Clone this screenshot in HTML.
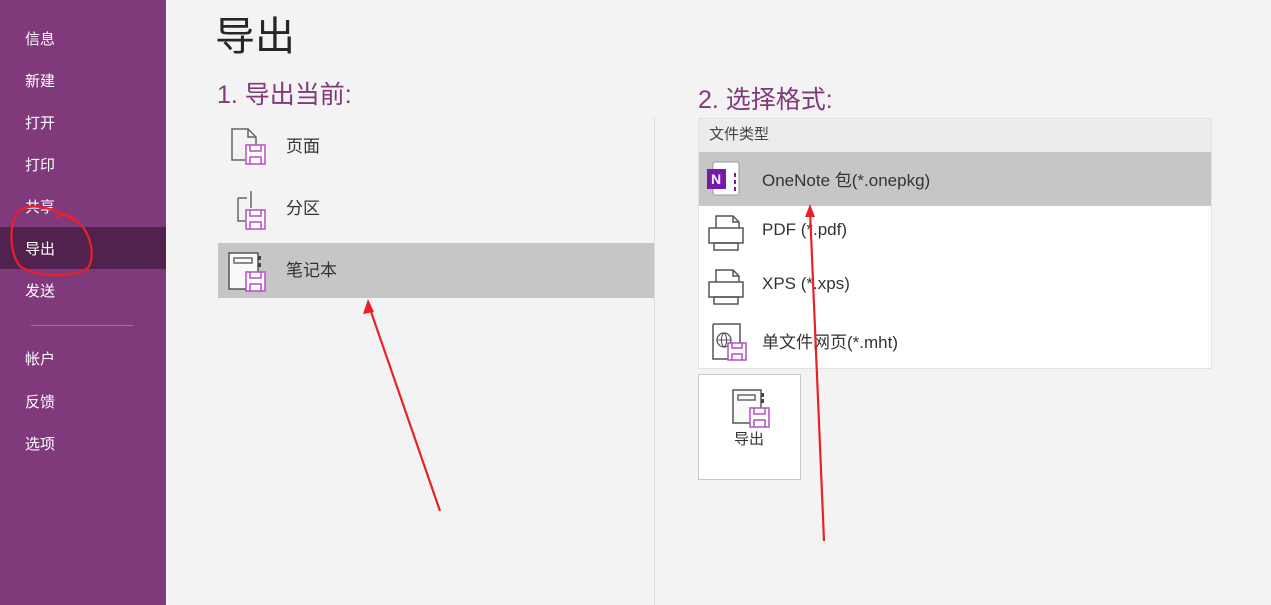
<!DOCTYPE html>
<html><head><meta charset="utf-8"><style>
*{margin:0;padding:0;box-sizing:border-box}
body{width:1271px;height:605px;background:#f3f3f3;position:relative;overflow:hidden;font-family:"Liberation Sans","Noto Sans CJK SC",sans-serif;color:#333}
.side{position:absolute;left:0;top:0;width:166px;height:605px;background:#80397b}
.side .m{position:absolute;left:25px;color:#fff;font-size:15px}
.sel{position:absolute;left:0;top:227px;width:166px;height:42px;background:#52224f}
.a{position:absolute}
.t{position:absolute;font-size:16px;color:#333}
svg{position:absolute;overflow:visible}
</style></head><body>
<div class="side">
<div class="sel"></div>
<div class="m" style="top:28px">信息</div>
<div class="m" style="top:70px">新建</div>
<div class="m" style="top:112px">打开</div>
<div class="m" style="top:154px">打印</div>
<div class="m" style="top:196px">共享</div>
<div class="m" style="top:238px">导出</div>
<div class="m" style="top:280px">发送</div>
<div class="a" style="top:325px;left:31px;width:102px;height:1px;background:#a56ea0"></div>
<div class="m" style="top:348px">帐户</div>
<div class="m" style="top:391px">反馈</div>
<div class="m" style="top:433px">选项</div>
</div>
<div class="a" style="left:215px;top:4px;font-size:40px;color:#262626">导出</div>
<div class="a" style="left:217px;top:75px;font-size:25px;color:#80397b">1. 导出当前:</div>
<div class="a" style="left:698px;top:80px;font-size:25px;color:#80397b">2. 选择格式:</div>
<div class="a" style="left:654px;top:118px;width:1px;height:487px;background:#dcdcdc"></div>
<div class="a" style="left:218px;top:243px;width:436px;height:55px;background:#c6c6c6"></div>
<div class="t" style="left:286px;top:132px;font-size:17px">页面</div>
<div class="t" style="left:286px;top:194px;font-size:17px">分区</div>
<div class="t" style="left:286px;top:256px;font-size:17px">笔记本</div>
<svg style="left:231px;top:128px" width="36" height="40"><path d="M1 27V1H17L25 9V17M17 1V9H25M1 27V32H14" fill="none" stroke="#666" stroke-width="1.5"/><rect x="15" y="17" width="19" height="19" fill="#fff" stroke="#b44fc0" stroke-width="1.5"/><path d="M19 17V23H30V17M19 36V29H30V36" fill="none" stroke="#b44fc0" stroke-width="1.5"/></svg>
<svg style="left:237px;top:190px" width="30" height="40"><path d="M14 1V18M1 8H10M1 8V31H8" fill="none" stroke="#666" stroke-width="1.5"/><rect x="9" y="20" width="19" height="19" fill="#fff" stroke="#b44fc0" stroke-width="1.5"/><path d="M13 20V26H24V20M13 39V32H24V39" fill="none" stroke="#b44fc0" stroke-width="1.5"/></svg>
<svg style="left:228px;top:252px" width="38" height="40"><rect x="1" y="1" width="29" height="36" fill="#fafafa" stroke="#555" stroke-width="1.5"/><rect x="6" y="6" width="18" height="5" fill="none" stroke="#666" stroke-width="1.5"/><rect x="30" y="4" width="3" height="4" fill="#444"/><rect x="30" y="11" width="3" height="4" fill="#444"/><rect x="18" y="20" width="19" height="19" fill="#fff" stroke="#b44fc0" stroke-width="1.5"/><path d="M22 20V26H33V20M22 39V32H33V39" fill="none" stroke="#b44fc0" stroke-width="1.5"/></svg>
<div class="a" style="left:698px;top:118px;width:514px;height:251px;background:#fff;border:1px solid #e2e2e2"></div>
<div class="a" style="left:699px;top:119px;width:512px;height:33px;background:#ececec"></div>
<div class="a" style="left:709px;top:123px;font-size:15px;color:#444">文件类型</div>
<div class="a" style="left:699px;top:152px;width:512px;height:54px;background:#c6c6c6"></div>
<div class="t" style="left:762px;top:166px;font-size:17px">OneNote 包(*.onepkg)</div>
<div class="t" style="left:762px;top:220px;font-size:17px">PDF (*.pdf)</div>
<div class="t" style="left:762px;top:274px;font-size:17px">XPS (*.xps)</div>
<div class="t" style="left:762px;top:328px;font-size:17px">单文件网页(*.mht)</div>
<svg style="left:707px;top:161px" width="36" height="36"><rect x="6" y="1" width="26" height="33" rx="2" fill="#fff" stroke="#999"/><rect x="0" y="8" width="19" height="20" fill="#7719aa"/><text x="4" y="23" font-size="14" font-weight="bold" fill="#fff" font-family="Liberation Sans">N</text><rect x="27" y="12" width="2" height="4" fill="#7719aa"/><rect x="27" y="19" width="2" height="4" fill="#7719aa"/><rect x="27" y="26" width="2" height="4" fill="#7719aa"/></svg>
<svg style="left:708px;top:215px" width="36" height="38"><path d="M8 13V1H25L31 7V13M25 1V7H31" fill="none" stroke="#555" stroke-width="1.5"/><rect x="1" y="13" width="34" height="15" fill="none" stroke="#555" stroke-width="1.5"/><rect x="6" y="28" width="24" height="7" fill="none" stroke="#555" stroke-width="1.5"/></svg>
<svg style="left:708px;top:269px" width="36" height="38"><path d="M8 13V1H25L31 7V13M25 1V7H31" fill="none" stroke="#555" stroke-width="1.5"/><rect x="1" y="13" width="34" height="15" fill="none" stroke="#555" stroke-width="1.5"/><rect x="6" y="28" width="24" height="7" fill="none" stroke="#555" stroke-width="1.5"/></svg>
<svg style="left:712px;top:323px" width="36" height="38"><path d="M1 1H28V20M1 1V36H16" fill="none" stroke="#555" stroke-width="1.5"/><circle cx="12" cy="17" r="7" fill="none" stroke="#555" stroke-width="1.3"/><path d="M5 17H19M12 10C8.5 13 8.5 21 12 24M12 10C15.5 13 15.5 21 12 24" fill="none" stroke="#555" stroke-width="1.1"/><rect x="16" y="20" width="18" height="17" fill="#fff" stroke="#b44fc0" stroke-width="1.5"/><path d="M20 20V25H30V20M20 37V31H30V37" fill="none" stroke="#b44fc0" stroke-width="1.5"/></svg>
<div class="a" style="left:698px;top:374px;width:103px;height:106px;background:#fff;border:1px solid #c8c8c8"></div>
<svg style="left:732px;top:389px" width="40" height="40"><rect x="1" y="1" width="28" height="33" fill="#fafafa" stroke="#555" stroke-width="1.5"/><rect x="6" y="6" width="17" height="5" fill="none" stroke="#666" stroke-width="1.5"/><rect x="29" y="4" width="3" height="4" fill="#444"/><rect x="29" y="10" width="3" height="4" fill="#444"/><rect x="18" y="19" width="19" height="19" fill="#fff" stroke="#b44fc0" stroke-width="1.5"/><path d="M22 19V25H33V19M22 38V31H33V38" fill="none" stroke="#b44fc0" stroke-width="1.5"/></svg>
<div class="a" style="left:734px;top:428px;font-size:15px;color:#333">导出</div>
<svg style="left:0;top:0" width="1271" height="605"><g fill="none" stroke="#e8202a" stroke-width="2.2"><path d="M440 511L368 303"/><path d="M824 541L810 210"/><path d="M77 222C60 210 30 200 18 212C8 225 10 255 20 266C35 278 75 278 88 268C96 255 90 232 78 222C70 215 62 212 56 218"/></g><path d="M368 299L363 314L374 312Z" fill="#e8202a"/><path d="M810 204L805 217L815 217Z" fill="#e8202a"/></svg>
</body></html>
